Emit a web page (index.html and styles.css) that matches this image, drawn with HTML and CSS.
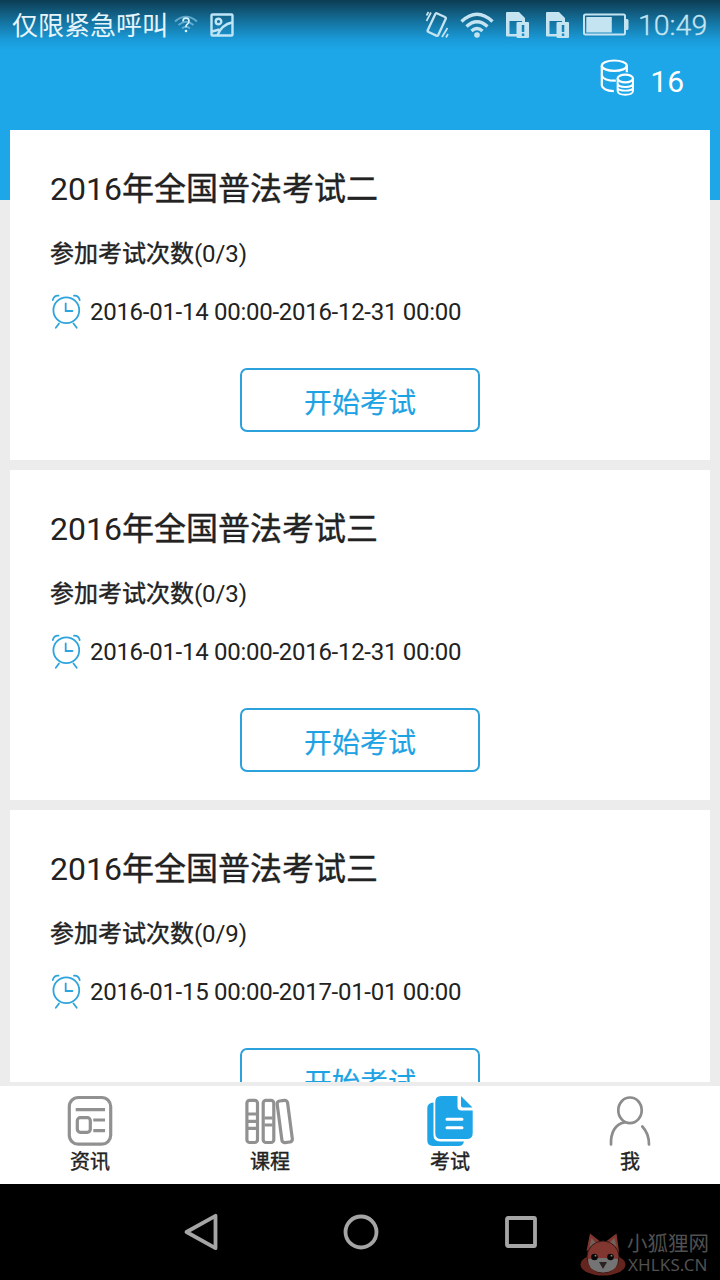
FILE: index.html
```
<!DOCTYPE html>
<html lang="zh-CN">
<head>
<meta charset="utf-8">
<title>考试</title>
<link rel="stylesheet" href="styles.css">
</head>
<body>
<svg class="defs" width="0" height="0">
  <symbol id="alarm" viewBox="0 0 32 36">
    <g fill="none" stroke="#2ea4dc" stroke-width="1.8" stroke-linecap="round">
      <circle cx="16.3" cy="17.3" r="12.9"/>
      <path d="M15.700 10.500v7.500h6.800"/>
      <path d="M2.800 7C3.500 4 5.700 2.400 8.500 2.600M24 2.600c2.800-.2 5 1.400 5.700 4.400M9 30.500l-3.200 4.200M23.500 30.500l3.200 4.200"/>
    </g>
  </symbol>
  <symbol id="sim" viewBox="0 0 24 26">
    <path fill="currentColor" fill-rule="evenodd" d="M1 0h12l6 6v4h-3V9H3.500v13H11v2.500H1q-1 0-1-1V1q0-1 1-1z"/>
    <path fill="currentColor" fill-rule="evenodd" d="M12 10h10q1 0 1 1v14q0 1-1 1H11.500q-1 0-1-1V11q0-1 1-1zM15.800 13v7h2.500v-7zM15.800 21.500v2.500h2.500v-2.500z"/>
  </symbol>
</svg>

<header class="status">
  <span class="carrier">仅限紧急呼叫</span>
  <svg class="no-wifi" width="24" height="20" viewBox="0 0 24 20">
    <g fill="none" stroke="#8bc9e8" stroke-width="2" opacity=".65"><path d="M1 6.500q11-9.500 22 0M4.500 10q7.500-6.500 15 0M8 13.500q4-3.500 8 0"/></g>
    <path d="M9 6.500q0-3.300 3-3.300t3 3q0 2-2 3.200-1 .7-1 2.800" fill="none" stroke="#d5f2ff" stroke-width="1.700"/>
    <circle cx="12" cy="16" r="1.300" fill="#d5f2ff"/>
  </svg>
  <svg class="photo" width="24" height="24" viewBox="0 0 24 24" fill="none" stroke="#bfe6f7" stroke-width="2.400">
    <rect x="1.500" y="1.500" width="21" height="21" rx="1"/>
    <circle cx="8.500" cy="8.500" r="2.800"/>
    <path d="M7.500 22Q12 11.500 22 9.500M2 18.500l7.500-2"/>
  </svg>
  <span class="spacer"></span>
  <svg class="vibrate" width="24" height="28" viewBox="0 0 24 28" fill="none" stroke="currentColor" stroke-width="2.300">
    <rect x="6" y="3.300" width="11.500" height="20.500" rx="1.500" transform="rotate(25 11.750 13.500)"/>
    <path d="M1.500 10l4.500-8.500M1.500 4.500l2-3.500M17 26l5.500-9M21 26.500l2-3.500" stroke-width="1.700"/>
  </svg>
  <svg class="wifi" width="34" height="26" viewBox="0 0 34 26" fill="none" stroke="currentColor" stroke-width="3.400">
    <path d="M1.500 9.500q15.500-14.500 31 0M6.500 14.500q10.500-9.500 21 0M11.500 19q5.500-4.800 11 0"/>
    <circle cx="17" cy="23" r="2.800" fill="currentColor" stroke="none"/>
  </svg>
  <svg class="sim" width="24" height="26"><use href="#sim"/></svg>
  <svg class="sim" width="24" height="26"><use href="#sim"/></svg>
  <svg class="battery" width="46" height="24" viewBox="0 0 46 24">
    <rect x="1" y="1.500" width="41" height="20" rx="1.500" fill="none" stroke="currentColor" stroke-width="2"/>
    <path d="M3.300 4h25.500v15.500H3.300zM43 6h1q1.500 0 1.500 1.500v8q0 1.500-1.500 1.500h-1z" fill="currentColor"/>
  </svg>
  <span class="time">10:49</span>
</header>

<main class="page">
  <div class="coins">
    <svg width="36" height="38" viewBox="0 0 36 38" fill="none" stroke="#fff" stroke-width="2.200">
      <ellipse cx="14.300" cy="6.700" rx="12.500" ry="5.200"/>
      <path d="M1.800 6.700V26.500q1 5 12 5.700M26.800 6.700v6.500M1.800 16.500q1.500 5.300 14 5.200"/>
      <ellipse cx="25.300" cy="19.500" rx="7.700" ry="3.800"/>
      <path d="M17.600 19.500V32q.5 3.800 7.700 3.800T33 32V19.500M17.600 24.500q.5 3.500 7.700 3.500t7.700-3.500M17.600 29q.5 2.600 7.700 2.600T33 29" stroke-width="1.900"/>
    </svg>
    <span class="coin-count">16</span>
  </div>
  <section class="exams">
    <article class="card">
      <h2 class="title">2016<span class="han">年全国普法考试二</span></h2>
      <p class="attempts"><span class="han">参加考试次数</span>(0/3)</p>
      <p class="period"><svg class="alarm"><use href="#alarm"/></svg>2016-01-14 00:00-2016-12-31 00:00</p>
      <button class="start">开始考试</button>
    </article>
    <article class="card">
      <h2 class="title">2016<span class="han">年全国普法考试三</span></h2>
      <p class="attempts"><span class="han">参加考试次数</span>(0/3)</p>
      <p class="period"><svg class="alarm"><use href="#alarm"/></svg>2016-01-14 00:00-2016-12-31 00:00</p>
      <button class="start">开始考试</button>
    </article>
    <article class="card">
      <h2 class="title">2016<span class="han">年全国普法考试三</span></h2>
      <p class="attempts"><span class="han">参加考试次数</span>(0/9)</p>
      <p class="period"><svg class="alarm"><use href="#alarm"/></svg>2016-01-15 00:00-2017-01-01 00:00</p>
      <button class="start">开始考试</button>
    </article>
  </section>
</main>

<nav class="tabs">
  <a class="tab">
    <svg class="tab-icon" viewBox="0 0 52 54" fill="none" stroke="#919191" stroke-width="3.200">
      <rect x="5.300" y="3.500" width="41.400" height="46.700" rx="9"/>
      <path d="M11.700 15.700H41M29.300 26H41M29.300 36.700H41"/>
      <rect x="13.300" y="23.700" width="13" height="14.600" rx="3"/>
    </svg>
    <span class="han">资讯</span>
  </a>
  <a class="tab">
    <svg class="tab-icon" viewBox="0 0 52 54" fill="none" stroke="#919191" stroke-width="3.200">
      <rect x="2.900" y="6.300" width="10.600" height="42.200" rx="2.800"/>
      <rect x="19.200" y="6.300" width="10.600" height="42.200" rx="2.800"/>
      <rect x="35.500" y="6.500" width="10.500" height="42" rx="2.800" transform="rotate(-7.500 40.700 27.500)"/>
      <path d="M4 20h8M4 27.300h8M4 34.300h8M20.500 24h8M20.500 31h8"/>
    </svg>
    <span class="han">课程</span>
  </a>
  <a class="tab">
    <svg class="tab-icon" viewBox="0 0 52 54">
      <path fill="#1da5e8" d="M9.500 8.500V41q0 6.500 6.500 6.500h24q-1 4.500-5.500 4.500H9q-5.700 0-5.700-5.700V14q0-5 6.200-5.500z"/>
      <path fill="#1da5e8" d="M17 2h16.500v10.500q0 4 4 4h11.200V39q0 6-6 6H17q-5.700 0-5.700-6V8q0-6 5.700-6zM37 2l11.500 11.500H39q-2 0-2-2z"/>
      <path stroke="#fff" stroke-width="3" stroke-linecap="round" d="M23 25.300h15M23 33.700h15"/>
    </svg>
    <span class="han">考试</span>
  </a>
  <a class="tab">
    <svg class="tab-icon" viewBox="0 0 52 54" fill="none" stroke="#8c8c8c" stroke-width="2.700" stroke-linecap="round">
      <ellipse cx="26" cy="16.300" rx="11.700" ry="12.800"/>
      <path d="M7 50.500C6.500 39 11 30 20.500 28.300M38.300 32.500q6.700 7 6.700 18"/>
    </svg>
    <span class="han">我</span>
  </a>
</nav>

<footer class="softkeys">
  <svg class="key" viewBox="0 0 40 40"><path d="M4.500 20L33.500 3.800v32.400z"/></svg>
  <svg class="key" viewBox="0 0 40 40"><circle cx="19" cy="20" r="15.500"/></svg>
  <svg class="key" viewBox="0 0 40 40"><rect x="5" y="6" width="28" height="28" rx="1"/></svg>
  <div class="watermark">
    <svg width="46" height="46" viewBox="0 0 46 46">
      <ellipse cx="23" cy="32.500" rx="22.500" ry="11" fill="#65251f"/>
      <path d="M6.500 19L10 1.500 22 11zM24 11L36.500 1.500 39 20z" fill="#823630"/>
      <path d="M9.500 15l2-9 6 7zM28 12l6.500-6 2 9z" fill="#72605b"/>
      <circle cx="23" cy="25" r="16" fill="#823630" stroke="#351715" stroke-width="1"/>
      <path d="M8 27q7-1 15-1t15 1q0 13-15 13.500Q8 40 8 27z" fill="#747474"/>
      <circle cx="14.500" cy="25" r="3.300" fill="#090808"/><circle cx="30.500" cy="25" r="3.300" fill="#090808"/>
      <circle cx="15.500" cy="23.700" r=".9" fill="#888"/><circle cx="31.500" cy="23.700" r=".9" fill="#888"/>
      <path d="M19 30h8l-4 7z" fill="#292323"/>
    </svg>
    <div class="mark-text"><span class="mark-name">小狐狸网</span><span class="mark-site">XHLKS.CN</span></div>
  </div>
</footer>
</body>
</html>
```
FILE: styles.css
```
* { box-sizing: border-box; }

body {
  margin: 0;
  width: 720px;
  height: 1280px;
  overflow: hidden;
  display: flex;
  flex-direction: column;
  background: #ececec;
  color: #222;
  font-family: Roboto, "Noto Sans CJK SC", sans-serif;
}

.defs { display: none; }
svg { flex: none; }
.han { -webkit-text-stroke: 0.4px currentColor; }

.status {
  height: 50px;
  flex: none;
  display: flex;
  align-items: center;
  padding: 0 12px;
  background: linear-gradient(#0c3c54 0, #10506f 8px, #1578a7 24px, #1a9bd9 40px, #1da6e8 50px);
  color: #c5e4f2;
}
.carrier { padding-top: 2px; font-size: 26px; line-height: 50px; color: #e6f5fc; }
.no-wifi { margin-left: 6px; }
.photo { margin-left: 12px; }
.spacer { flex: 1; }
.wifi { margin-left: 11px; }
.sim { margin-left: 12px; }
.sim + .sim { margin-left: 16px; }
.battery { margin-left: 13px; }
.time {
  width: 70px;
  margin-left: 9px;
  padding-top: 2px;
  font-size: 28.5px;
  line-height: 50px;
  font-weight: 300;
  -webkit-text-stroke: 0.3px currentColor;
}

.page {
  height: 1032px;
  flex: none;
  overflow: hidden;
  background: linear-gradient(#1da6e8 150px, #ececec 150px);
}
.coins {
  height: 80px;
  display: flex;
  align-items: flex-start;
  justify-content: flex-end;
  padding: 9px 36px 0 0;
  color: #fff;
}
.coin-count { margin-left: 14px; font-size: 30px; line-height: 46px; }

.exams { display: grid; gap: 10px; padding: 0 10px; }
.card { height: 330px; padding: 35px 40px 0; background: #fff; }
.title { margin: 0; font-size: 32px; line-height: 48px; font-weight: 400; }
.attempts { margin: 25px 0 0; font-size: 24px; line-height: 32px; letter-spacing: -0.1px; }
.attempts .han { letter-spacing: 0; }
.period {
  margin: 22px 0 0;
  height: 40px;
  display: flex;
  align-items: center;
  font-size: 24px;
  letter-spacing: -0.28px;
}
.alarm { width: 32px; height: 36px; margin: -3px 8px 0 0; }
.start {
  display: block;
  width: 240px;
  height: 64px;
  margin: 36px auto 0;
  padding: 2px 0 0;
  border: 2px solid #2ca2dc;
  border-radius: 7px;
  background: #fff;
  color: #1da3e4;
  font: inherit;
  font-size: 28px;
  -webkit-text-stroke: 0.2px currentColor;
}

.tabs {
  height: 102px;
  flex: none;
  display: grid;
  grid-template-columns: repeat(4, 1fr);
  border-top: 4px solid #ececec;
  background: #fff;
}
.tab {
  display: flex;
  flex-direction: column;
  align-items: center;
  padding-top: 8px;
  font-size: 20px;
  line-height: 28px;
}
.tab-icon { width: 52px; height: 54px; }

.softkeys {
  height: 96px;
  flex: none;
  display: flex;
  align-items: center;
  padding-left: 182px;
  gap: 120px;
  background: #000;
}
.key { width: 40px; height: 40px; fill: none; stroke: #a5a5a5; stroke-width: 3.8; stroke-linejoin: round; }
.watermark { display: flex; margin: 46px 0 0 -82px; }
.mark-text { display: flex; flex-direction: column; margin-left: 1px; color: #505050; white-space: nowrap; }
.mark-name { font-size: 20.5px; line-height: 25px; }
.mark-site { padding-left: 1px; font: 17px/16px "Noto Sans", sans-serif; letter-spacing: 0.1px; }
```
